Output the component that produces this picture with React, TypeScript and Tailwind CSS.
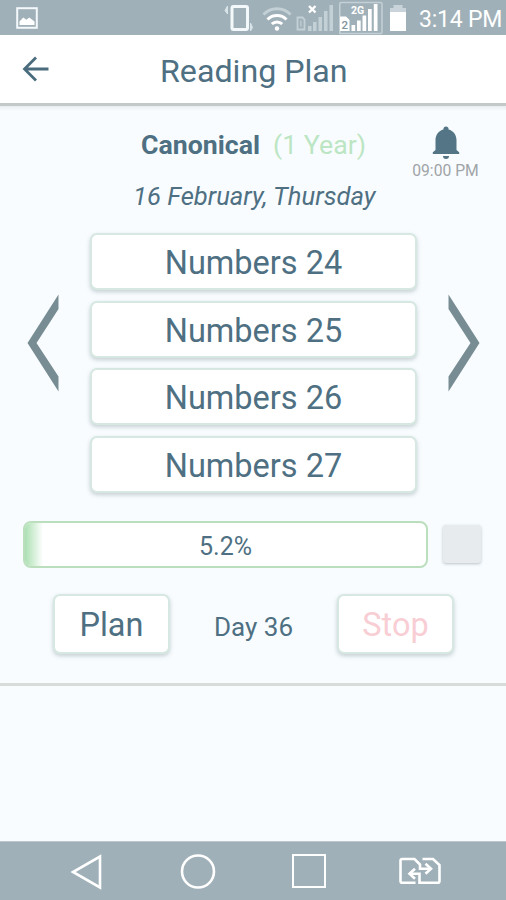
import { ReactNode } from "react";
import clsx from "clsx";

const chapters = ["Numbers 24", "Numbers 25", "Numbers 26", "Numbers 27"];
const progress = 5.2;

function PictureIcon() {
    return (
        <svg width="22" height="22" viewBox="0 0 22 22" fill="none">
            <rect x="1.2" y="1.2" width="19.6" height="19.6" stroke="#f3f8fa" strokeWidth="2" />
            <path d="M3.500 18v-3.500l3.800-4 3 2.200 3-2.200 5.200 4V18z" fill="#fff" />
        </svg>
    );
}

function VibrateIcon() {
    return (
        <svg width="30" height="30" viewBox="0 0 30 30" fill="none">
            <rect x="8" y="3.500" width="15.500" height="23" rx="1.500" stroke="#f3f8fa" strokeWidth="3" />
            <path d="M3.500 3v8L1 7.500z M26.500 20v8l2-3.500z" fill="#d9e4e8" stroke="#d9e4e8" />
        </svg>
    );
}

function WifiIcon() {
    return (
        <svg width="30" height="26" viewBox="0 0 30 26" fill="none" strokeWidth="3">
            <path d="M1.500 8.500a19 19 0 0 1 27 0" stroke="#c3d0d5" />
            <path d="M5.500 13.500a13.500 13.500 0 0 1 19 0" stroke="#fff" />
            <path d="M9.800 18a7.500 7.500 0 0 1 10.400 0" stroke="#fff" />
            <circle cx="15" cy="22.500" r="2.200" fill="#fff" />
        </svg>
    );
}

function NoSignalIcon() {
    return (
        <svg width="38" height="28" viewBox="0 0 38 28" fill="none">
            <path d="M1.500 13.500h5l2 2v10h-7z" stroke="#c3d0d5" strokeWidth="1.800" />
            <path d="M4.900 16.500v6" stroke="#c3d0d5" strokeWidth="1.200" />
            <path d="M12 22h3.500v5H12zM17 18h3.500v9H17zM22.500 13h3.500v14h-3.500zM28 7h3.500v20H28zM33.500 1H37v26h-3.500z" fill="#c3d0d5" />
            <path d="M13 2l6.500 6.500M19.500 2L13 8.500" stroke="#fff" strokeWidth="2.400" />
        </svg>
    );
}

function SignalIcon() {
    return (
        <svg width="44" height="35" viewBox="0 0 44 35" fill="none">
            <path d="M.75 34V4q0-1.500 1.500-1.500H41.500q1.500 0 1.500 1.500V32q0 1.500-1.500 1.500H.75" stroke="#c3d0d5" strokeWidth="1.500" />
            <path d="M1 16.500h6l3.500 3.500V31H1z" fill="#fff" />
            <text x="2.500" y="28.500" fontFamily="Roboto" fontSize="11.500" fontWeight="500" fill="#7f949d">2</text>
            <path d="M12.500 25h3.700v6h-3.700zM18 20.500h3.700V31H18zM23.500 15.500h3.700V31h-3.700zM29 9h3.700v22H29zM34.800 4h3.700v27h-3.700z" fill="#fff" />
            <text x="12" y="13.500" fontFamily="Roboto" fontSize="10.500" fontWeight="700" fill="#fff">2G</text>
        </svg>
    );
}

function BatteryIcon() {
    return (
        <svg width="18" height="28" viewBox="0 0 18 28">
            <path d="M4.500 1h9v3H17v4H1V4h3.500z" fill="#c8d4d9" />
            <path d="M1 8h16v19H1z" fill="#fff" />
        </svg>
    );
}

function BellIcon() {
    return (
        <svg width="28" height="34" viewBox="0 0 28 34" fill="#547585">
            <path d="M14 .5c1.500 0 2.600 1 2.600 2.500v.5c4.700 1.200 7.900 5.400 7.900 10.500v10l2.700 2.300V28H.8v-1.700L3.500 24V14c0-5.100 3.200-9.300 7.900-10.500V3C11.400 1.500 12.500.5 14 .5z" />
            <path d="M11 30h6a3 3 0 0 1-6 0z" />
        </svg>
    );
}

function Chevron({ flip = false }: { flip?: boolean }) {
    return (
        <svg width="32" height="98" viewBox="0 0 32 98" className={clsx(flip && "-scale-x-100")}>
            <path d="M31.500 0.500V15L9.500 49 31.500 82.500V97.500L.5 49z" fill="#788d93" />
        </svg>
    );
}

function SimSwitchIcon() {
    return (
        <svg width="42" height="28" viewBox="0 0 42 28" fill="none" stroke="#fff" strokeWidth="2.600">
            <path d="M16.500 25.700H3.300q-1.800 0-1.800-1.800V3.800q0-1.800 1.800-1.800H15.500l5.500 5.500v4.300H32" />
            <path d="M23.500 2H34l6.500 6v15.900q0 1.800-1.800 1.800H20.500V16.700H11" />
            <path d="M26.500 6.800l5.500 5-5.500 5M16 11.700l-5.500 5 5.500 5" />
        </svg>
    );
}

function Button({ children, className }: { children: ReactNode; className?: string }) {
    return (
        <button
            className={clsx(
                "flex items-center justify-center rounded-[7px] border-2 border-[#d6e8e1] bg-white pt-[4px] text-[32.500px] leading-none shadow-[0_2px_4px_rgba(70,95,95,0.28)]",
                className
            )}
        >
            {children}
        </button>
    );
}

export default function App() {
    return (
        <div className="flex h-[900px] w-[506px] flex-col overflow-hidden bg-[#f8fcff] font-[Roboto,sans-serif] text-[#4e7082]">
            {/* Status bar */}
            <div className="flex h-[35px] shrink-0 items-start bg-[#a0b0b8] pl-4 text-white">
                <div className="pt-[7px]"><PictureIcon /></div>
                <div className="ml-[186px] pt-[3px]"><VibrateIcon /></div>
                <div className="ml-2 pt-[6px]"><WifiIcon /></div>
                <div className="ml-1 pt-1"><NoSignalIcon /></div>
                <div className="ml-[5px]"><SignalIcon /></div>
                <div className="ml-[6px] pt-1"><BatteryIcon /></div>
                <span className="ml-[12px] whitespace-nowrap pt-[8px] text-[23px] leading-6 tracking-[-0.2px]">3:14 PM</span>
            </div>

            {/* Header */}
            <header className="flex h-[71px] shrink-0 items-center border-b-[3px] border-[#c3c9c9] bg-white pl-[22px]">
                <svg width="28" height="26" viewBox="0 0 28 26" fill="none" stroke="#4a6c7d" strokeWidth="2.800">
                    <path d="M26.500 13H3M14 1.500L2.500 13 14 24.500" />
                </svg>
                <h1 className="ml-[110px] pt-[5px] text-[32.200px] leading-none">Reading Plan</h1>
            </header>

            <main className="flex h-[580px] shrink-0 flex-col border-b-[3px] border-[#d8dddc] bg-linear-to-b from-[#e9edef] to-[#f8fcff] to-[5px]">
                <div className="flex pt-[20px]">
                    <div className="ml-[133px] w-[279px] pt-[3px]">
                        <div className="flex whitespace-nowrap pl-2 text-[26.700px] leading-8">
                            <span className="font-bold">Canonical</span>
                            <span className="ml-[13px] text-[#bce6c3]">(1 Year)</span>
                        </div>
                        <p className="mt-[19px] whitespace-nowrap text-[25.600px] italic leading-8">16 February, Thursday</p>
                    </div>
                    <div className="flex w-[67px] flex-col items-center">
                        <BellIcon />
                        <span className="mt-[2px] whitespace-nowrap text-[15.700px] leading-[18px] text-[#a0a4a7]">09:00 PM</span>
                    </div>
                </div>

                <div className="mt-[21px] flex items-center justify-between pl-[27px] pr-[26px]">
                    <div className="mb-[40px]"><Chevron /></div>
                    <div className="flex w-[327px] flex-col gap-[10.500px]">
                        {chapters.map((name) => (
                            <Button key={name} className="h-[57px]">{name}</Button>
                        ))}
                    </div>
                    <div className="mb-[40px]"><Chevron flip /></div>
                </div>

                {/* Progress */}
                <div className="mt-[28px] flex items-center pl-[23px]">
                    <div className="flex h-[47px] w-[405px] overflow-hidden rounded-[8px] border-2 border-[#bbdfbd] bg-white">
                        <div
                            className="bg-linear-to-r from-[#abe0b2] to-white"
                            style={{ width: `${progress - 0.7}%` }}
                        />
                        <span className="flex flex-1 items-center justify-center pr-[18px] pt-[5px] text-[25px]">{progress}%</span>
                    </div>
                    <div className="ml-[15px] size-[38px] rounded-[3px] bg-[#e7ebee] shadow-[0_1px_3px_rgba(70,90,100,0.35)]" />
                </div>

                <div className="mt-[26px] flex items-center pl-[53px]">
                    <Button className="h-[60px] w-[117px]">Plan</Button>
                    <span className="w-[167px] pt-[7px] text-center text-[26px]">Day 36</span>
                    <Button className="h-[60px] w-[117px] text-[#f8ced4]">Stop</Button>
                </div>
            </main>

            {/* Navigation bar */}
            <nav className="mt-auto flex h-[59px] shrink-0 items-start border-t border-[#bcc6cc] bg-[#a0b0b8] pl-[70px] pt-[12px]">
                <svg width="34" height="36" viewBox="0 0 34 36" fill="none" stroke="#fff" strokeWidth="2.600">
                    <path d="M30 2.500v31L3 18z" />
                </svg>
                <svg className="ml-[76px]" width="36" height="36" viewBox="0 0 36 36" fill="none" stroke="#fff" strokeWidth="2.600">
                    <circle cx="18" cy="17.500" r="16" />
                </svg>
                <div className="ml-[76px] size-[34px] border-[2.500px] border-white" />
                <div className="ml-[73px] pt-[3px]"><SimSwitchIcon /></div>
            </nav>
        </div>
    );
}
